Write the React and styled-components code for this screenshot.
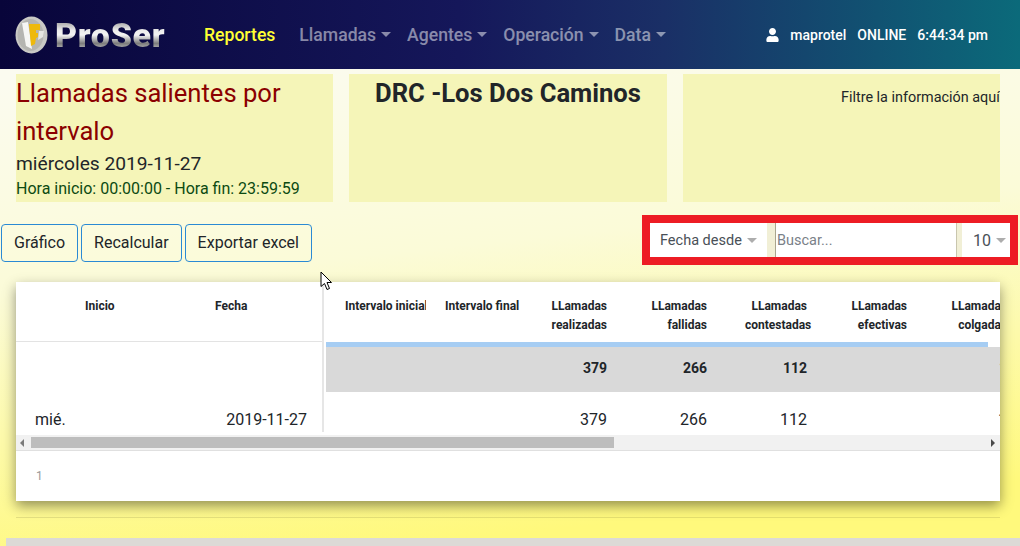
import React from 'react'
import styled, { createGlobalStyle } from 'styled-components'
import { FaUser } from 'react-icons/fa'

const Global = createGlobalStyle`
  html, body { margin: 0; padding: 0; height: 100%; overflow: hidden; }
  body { font-family: Roboto, "Liberation Sans", sans-serif; color: #212529; }
  * { box-sizing: border-box; }
`
const Page = styled.div`
  position: relative;
  width: 1020px;
  height: 546px;
  overflow: hidden;
  background: linear-gradient(174deg, #fbfbf0 12%, #fbfbd8 45%, #fff97c 90%);
`
const Navbar = styled.nav`
  display: flex;
  align-items: center;
  height: 69px;
  padding: 0 32px 0 15px;
  background: linear-gradient(90deg, #08053a 0%, #15175a 45%, #1a2f66 65%, #0b6a7a 100%);
`
const Logo = styled.div`
  display: flex;
  align-items: center;
  gap: 7px;
  width: 189px;
`
const LogoText = styled.span`
  font-family: Roboto, sans-serif;
  font-weight: 900;
  font-size: 34px;
  letter-spacing: 0.7px;
  line-height: 38px;
  background: linear-gradient(180deg, #9c9c9c 12%, #ececec 38%, #f4f4f4 50%, #7c7c7c 72%, #bcbcbc 88%);
  -webkit-background-clip: text;
  background-clip: text;
  color: transparent;
`
const NavLinks = styled.div`
  display: flex;
  align-items: center;
  gap: 16px;
`
const NavLink = styled.a`
  display: flex;
  align-items: center;
  margin-right: ${p => (p.$active ? 8 : 0)}px;
  font-size: 17.6px;
  font-weight: 500;
  color: ${p => (p.$active ? '#ffff33' : 'rgba(255,255,255,.5)')};
`
const Caret = styled.i`
  display: inline-block;
  margin-left: 5px;
  border-top: 5px solid ${p => p.$color || 'rgba(255,255,255,.5)'};
  border-left: 5px solid transparent;
  border-right: 5px solid transparent;
`
const UserBox = styled.div`
  display: flex;
  align-items: center;
  margin-left: auto;
  color: #fff;
  font-size: 14px;
  font-weight: 500;
  gap: 11px;
`
const UserIcon = styled(FaUser)`
  width: 13px;
  height: 14px;
`
const InfoRow = styled.div`
  display: grid;
  grid-template-columns: 317px 318px 317px;
  gap: 16px;
  padding: 5px 0 0 16px;
`
const Panel = styled.section`
  height: 128px;
  background: #f5f5b8;
  overflow: hidden;
`
const ReportTitle = styled.h1`
  margin: 0;
  font-size: 25.6px;
  line-height: 38px;
  font-weight: 400;
  color: #8b0000;
`
const ReportDate = styled.div`
  font-size: 19.2px;
  line-height: 27px;
`
const ReportHours = styled.div`
  font-size: 16px;
  line-height: 24px;
  color: #0c4a12;
`
const SiteTitle = styled.h2`
  margin: 0;
  font-size: 25.6px;
  line-height: 38px;
  font-weight: 700;
  text-align: center;
`
const FilterHint = styled.div`
  padding: 15px 0 0 158px;
  font-size: 14.4px;
  line-height: 17px;
  white-space: nowrap;
`
const Toolbar = styled.div`
  display: flex;
  justify-content: space-between;
  height: 50px;
  margin-top: 13px;
  padding: 9px 2px 0 1px;
`
const Buttons = styled.div`
  display: flex;
  gap: 3px;
  height: 38px;
`
const Button = styled.button`
  padding: 0 12px 2px;
  font: 400 16px Roboto, sans-serif;
  color: #212529;
  background: transparent;
  border: 1px solid #2a8ad4;
  border-radius: 4px;
`
const FilterBox = styled.div`
  display: flex;
  width: 376px;
  height: 50px;
  margin-top: -9px;
  border: 8px solid #ed1c24;
  background: #f1efd6;
`
const Select = styled.div`
  display: flex;
  align-items: center;
  justify-content: space-between;
  width: ${p => p.$w}px;
  padding: 0 ${p => p.$pr}px 0 ${p => p.$pl}px;
  background: #fff;
  font-size: ${p => p.$size}px;
  color: #495057;
`
const Search = styled.div`
  display: flex;
  align-items: center;
  width: 182px;
  margin: 0 5px 0 8px;
  padding-left: 1px;
  background: #fff;
  border-left: 1px solid #a9a58e;
  border-right: 1px solid #c9c6ae;
  font-size: 14.5px;
  color: #7a8188;
`
const Card = styled.div`
  margin: 17px 0 0 16px;
  width: 984px;
  height: 219px;
  background: #fff;
  box-shadow: 0 5px 12px rgba(0, 0, 0, 0.42);
  overflow: hidden;
`
const TableArea = styled.div`
  display: flex;
  height: 153px;
`
const FixedPart = styled.div`
  flex: 0 0 308px;
  height: 150px;
  overflow: hidden;
  border-right: 2px solid #e6e6e6;
`
const ScrollPart = styled.div`
  flex: 0 0 676px;
  padding-left: 2px;
  overflow: hidden;
`
const FixedRow = styled.div`
  display: grid;
  grid-template-columns: 50px 130px 130px;
  width: 310px;
  height: ${p => p.$h}px;
  border-bottom: ${p => (p.$line ? '1px solid #e3e3e3' : '0')};
`
const ScrollRow = styled.div`
  display: grid;
  grid-template-columns: repeat(7, 100px);
  width: 700px;
  height: ${p => p.$h}px;
  background: ${p => p.$bg || 'transparent'};
  font-weight: ${p => (p.$bold ? 700 : 400)};
`
const HeadCell = styled.div`
  padding: 15px 19px 0;
  font-size: 12px;
  font-weight: 700;
  line-height: 19px;
  text-align: ${p => p.$align || 'right'};
  white-space: nowrap;
  overflow: ${p => (p.$wrap ? 'visible' : 'hidden')};
`
const HeadLine = styled.span`
  display: block;
`
const BodyCell = styled.div`
  padding: ${p => p.$top}px 19px 0;
  font-size: ${p => p.$size || 16}px;
  line-height: 20px;
  text-align: ${p => p.$align || 'right'};
`
const ProgressBar = styled.div`
  width: 662px;
  height: 5px;
  background: #a6cdf3;
`
const Scrollbar = styled.div`
  display: flex;
  align-items: center;
  height: 16px;
  padding: 0 4px;
  background: #f1f1f1;
  border-bottom: 1px solid #e0e0e0;
`
const ArrowLeft = styled.i`
  border-right: 4px solid #7a7a7a;
  border-top: 4px solid transparent;
  border-bottom: 4px solid transparent;
`
const ArrowRight = styled.i`
  margin-left: auto;
  margin-right: 1px;
  border-left: 4px solid #4a4a4a;
  border-top: 4px solid transparent;
  border-bottom: 4px solid transparent;
`
const Thumb = styled.div`
  width: 583px;
  height: 11px;
  margin-left: 7px;
  background: #bdbdbd;
`
const Pager = styled.div`
  padding: 16px 20px 0;
  font-size: 12px;
  line-height: 18px;
  color: #999;
`
const Divider = styled.hr`
  margin: 16px 20px 0 16px;
  border: 0;
  border-top: 1px solid rgba(0, 0, 0, 0.1);
`
const BottomBar = styled.div`
  height: 8px;
  margin: 20px 0 0 6px;
  background: #dcdad6;
`
const Cursor = styled.svg`
  position: absolute;
  left: 320px;
  top: 271px;
`

const navItems = ['Llamadas', 'Agentes', 'Operación', 'Data']
const columns = [
  { head: ['Intervalo inicial'], align: 'left' },
  { head: ['Intervalo final'], align: 'left' },
  { head: ['LLamadas', 'realizadas'], total: '379', value: '379' },
  { head: ['LLamadas', 'fallidas'], total: '266', value: '266' },
  { head: ['LLamadas', 'contestadas'], total: '112', value: '112' },
  { head: ['LLamadas', 'efectivas'] },
  { head: ['LLamadas', 'colgadas'], total: '1', value: '1' },
]

function LogoMark() {
  return (
    <svg width="33" height="38" viewBox="0 0 33 38">
      <ellipse cx="16.500" cy="19" rx="16" ry="18.500" fill="#c9c9c5" />
      <ellipse cx="15.500" cy="19" rx="13" ry="16" fill="#b5b5b1" />
      <path d="M7 7 L13 6 L17 33 L11 30 Z" fill="#f6f6f4" />
      <path d="M14 8 L25 8 L25 14 L21 14 L21 17 L23 17 L23 21 L21 22 L20 28 L16 30 Z" fill="#eeb90c" />
      <path d="M24 15 L29 15 L28 21 L23 24 Z" fill="#e6e6e2" />
    </svg>
  )
}

export default function App() {
  return (
    <Page>
      <Global />
      <Navbar>
        <Logo>
          <LogoMark />
          <LogoText>ProSer</LogoText>
        </Logo>
        <NavLinks>
          <NavLink $active>Reportes</NavLink>
          {navItems.map(n => (
            <NavLink key={n}>{n}<Caret /></NavLink>
          ))}
        </NavLinks>
        <UserBox>
          <UserIcon />
          <span>maprotel</span>
          <span>ONLINE</span>
          <span>6:44:34 pm</span>
        </UserBox>
      </Navbar>

      <InfoRow>
        <Panel>
          <ReportTitle>Llamadas salientes por intervalo</ReportTitle>
          <ReportDate>miércoles 2019-11-27</ReportDate>
          <ReportHours>Hora inicio: 00:00:00 - Hora fin: 23:59:59</ReportHours>
        </Panel>
        <Panel>
          <SiteTitle>DRC -Los Dos Caminos</SiteTitle>
        </Panel>
        <Panel>
          <FilterHint>Filtre la información aquí</FilterHint>
        </Panel>
      </InfoRow>

      <Toolbar>
        <Buttons>
          <Button>Gráfico</Button>
          <Button>Recalcular</Button>
          <Button>Exportar excel</Button>
        </Buttons>
        <FilterBox>
          <Select $w={117} $pl={10} $pr={10} $size={14.5}>Fecha desde<Caret $color="#adadad" /></Select>
          <Search>Buscar...</Search>
          <Select $w={48} $pl={11} $pr={5} $size={16}>10<Caret $color="#adadad" /></Select>
        </FilterBox>
      </Toolbar>

      <Card>
        <TableArea>
          <FixedPart>
            <FixedRow $h={60} $line>
              <HeadCell />
              <HeadCell $align="left">Inicio</HeadCell>
              <HeadCell $align="left">Fecha</HeadCell>
            </FixedRow>
            <FixedRow $h={50} />
            <FixedRow $h={40}>
              <BodyCell $align="left" $top={18}>mié.</BodyCell>
              <div />
              <BodyCell $top={18}>2019-11-27</BodyCell>
            </FixedRow>
          </FixedPart>
          <ScrollPart>
            <ScrollRow $h={60}>
              {columns.map(c => (
                <HeadCell key={c.head.join()} $align={c.align} $wrap={c.head.length > 1}>
                  {c.head.map(t => <HeadLine key={t}>{t}</HeadLine>)}
                </HeadCell>
              ))}
            </ScrollRow>
            <ProgressBar />
            <ScrollRow $h={45} $bg="#d9d9d9" $bold>
              {columns.map(c => (
                <BodyCell key={c.head.join()} $size={14} $top={11}>{c.total}</BodyCell>
              ))}
            </ScrollRow>
            <ScrollRow $h={43}>
              {columns.map(c => (
                <BodyCell key={c.head.join()} $top={18}>{c.value}</BodyCell>
              ))}
            </ScrollRow>
          </ScrollPart>
        </TableArea>
        <Scrollbar>
          <ArrowLeft />
          <Thumb />
          <ArrowRight />
        </Scrollbar>
        <Pager>1</Pager>
      </Card>

      <Divider />
      <BottomBar />

      <Cursor width="13" height="20" viewBox="0 0 13 20">
        <path d="M1 1 L1 15.500 L4.500 12.500 L7 18.500 L9.500 17.500 L7 11.500 L11.500 11.500 Z" fill="#fff" stroke="#000" strokeWidth="1" />
      </Cursor>
    </Page>
  )
}
